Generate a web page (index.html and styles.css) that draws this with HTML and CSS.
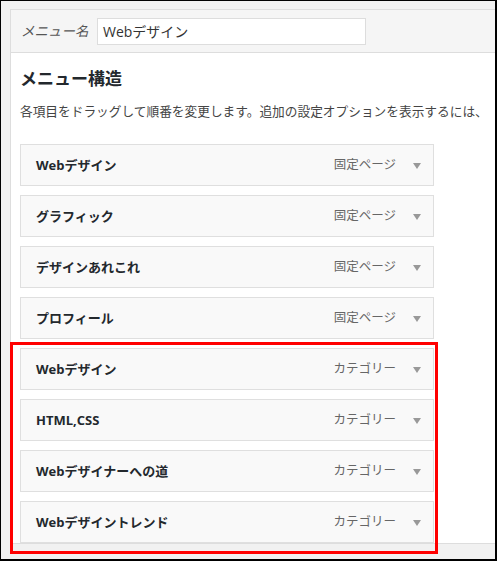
FILE: index.html
```html
<!DOCTYPE html>
<html lang="ja">
<head>
<meta charset="utf-8">
<title>メニュー構造</title>
<link rel="stylesheet" href="styles.css">
</head>
<body>
<div class="frame">
  <div class="panel">
    <div class="panel-header">
      <label class="name-label">メニュー名</label>
      <div class="name-input">Webデザイン</div>
    </div>
    <div class="panel-body">
      <h3 class="title">メニュー構造</h3>
      <p class="desc">各項目をドラッグして順番を変更します。追加の設定オプションを表示するには、</p>
      <ul class="menu-list">
        <li class="item"><span class="item-title">Webデザイン</span><span class="item-type">固定ページ</span><span class="arrow"></span></li>
        <li class="item"><span class="item-title">グラフィック</span><span class="item-type">固定ページ</span><span class="arrow"></span></li>
        <li class="item"><span class="item-title">デザインあれこれ</span><span class="item-type">固定ページ</span><span class="arrow"></span></li>
        <li class="item"><span class="item-title">プロフィール</span><span class="item-type">固定ページ</span><span class="arrow"></span></li>
        <li class="item"><span class="item-title">Webデザイン</span><span class="item-type">カテゴリー</span><span class="arrow"></span></li>
        <li class="item"><span class="item-title">HTML,CSS</span><span class="item-type">カテゴリー</span><span class="arrow"></span></li>
        <li class="item"><span class="item-title">Webデザイナーへの道</span><span class="item-type">カテゴリー</span><span class="arrow"></span></li>
        <li class="item"><span class="item-title">Webデザイントレンド</span><span class="item-type">カテゴリー</span><span class="arrow"></span></li>
      </ul>
    </div>
  </div>
  <div class="highlight"></div>
</div>
</body>
</html>
```
FILE: styles.css
```css
* { box-sizing: border-box; }
html, body { margin: 0; padding: 0; background: #fff; }
body {
  font-family: "Open Sans", "Noto Sans CJK JP", sans-serif;
  color: #333;
}
.frame {
  position: relative;
  width: 497px;
  height: 561px;
  overflow: hidden;
  background: #f1f1f1;
  border-style: solid;
  border-color: #000;
  border-width: 1px 2px 2px 1px;
  padding: 8px 0 0 9px;
}
.panel {
  width: 640px;
  border: 1px solid #dddddd;
  background: #fff;
}
.panel-header {
  display: flex;
  align-items: center;
  height: 43px;
  padding: 0 0 0 10px;
  background: #f5f5f5;
  border-bottom: 1px solid #dddddd;
}
.name-label {
  width: 76px;
  font-size: 13.5px;
  font-style: italic;
  color: #555;
  line-height: 20px;
}
.name-input {
  width: 269px;
  height: 27px;
  border: 1px solid #dddddd;
  background: #fff;
  padding-left: 5px;
  font-size: 14px;
  line-height: 25px;
  color: #333;
}
.panel-body {
  padding: 14px 0 0 9px;
}
.title {
  margin: 0;
  font-size: 17px;
  line-height: 24px;
  font-weight: 700;
  color: #23282d;
}
.desc {
  margin: 10px 0 0;
  font-size: 12.7px;
  line-height: 20px;
  color: #444;
  white-space: nowrap;
}
.menu-list {
  list-style: none;
  margin: 23px 0 0;
  padding: 0;
  width: 414px;
  display: flex;
  flex-direction: column;
  gap: 9px;
}
.item {
  display: flex;
  align-items: center;
  height: 42px;
  padding: 0 12px 0 15px;
  border: 1px solid #dfdfdf;
  background: #f9f9f9;
}
.item-title {
  flex: 1;
  font-size: 13px;
  font-weight: 700;
  color: #23282d;
  line-height: 20px;
}
.item-type {
  font-size: 12.5px;
  color: #666;
  line-height: 20px;
  margin-right: 17px;
}
.arrow {
  width: 0;
  height: 0;
  margin-top: 2px;
  border-left: 4px solid transparent;
  border-right: 4px solid transparent;
  border-top: 6px solid #999;
}
.highlight {
  position: absolute;
  left: 9px;
  top: 341px;
  width: 428px;
  height: 212px;
  border: 3px solid #ff0000;
  pointer-events: none;
}
```
